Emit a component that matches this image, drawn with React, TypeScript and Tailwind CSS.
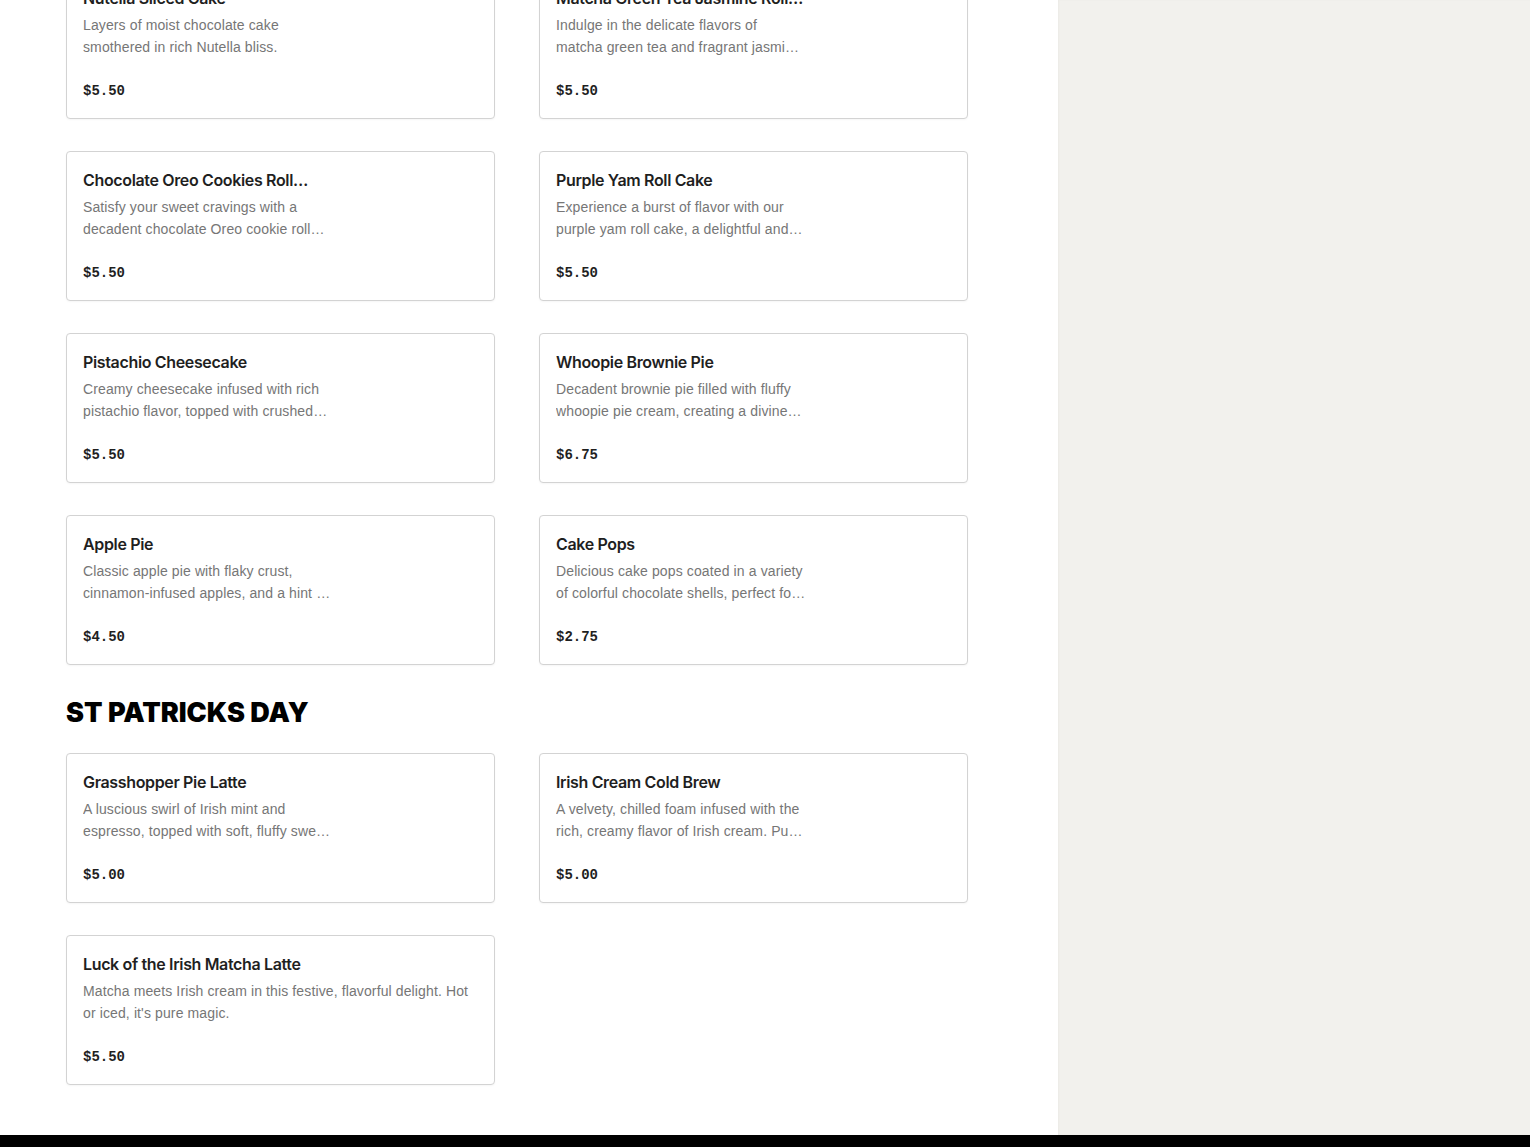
import React from "react";

type Item = { title: string; desc: string; price: string; wide?: boolean };

const rows: Item[][] = [
  [
    { title: "Nutella Sliced Cake", desc: "Layers of moist chocolate cake smothered in rich Nutella bliss.", price: "$5.50" },
    { title: "Matcha Green Tea Jasmine Roll Cake", desc: "Indulge in the delicate flavors of matcha green tea and fragrant jasmine tea rolled into a soft sponge cake.", price: "$5.50" },
  ],
  [
    { title: "Chocolate Oreo Cookies Roll Cake", desc: "Satisfy your sweet cravings with a decadent chocolate Oreo cookie roll cake filled with cream.", price: "$5.50" },
    { title: "Purple Yam Roll Cake", desc: "Experience a burst of flavor with our purple yam roll cake, a delightful and colorful treat.", price: "$5.50" },
  ],
  [
    { title: "Pistachio Cheesecake", desc: "Creamy cheesecake infused with rich pistachio flavor, topped with crushed pistachios.", price: "$5.50" },
    { title: "Whoopie Brownie Pie", desc: "Decadent brownie pie filled with fluffy whoopie pie cream, creating a divine dessert.", price: "$6.75" },
  ],
  [
    { title: "Apple Pie", desc: "Classic apple pie with flaky crust, cinnamon-infused apples, and a hint of nutmeg.", price: "$4.50" },
    { title: "Cake Pops", desc: "Delicious cake pops coated in a variety of colorful chocolate shells, perfect for any occasion.", price: "$2.75" },
  ],
];

const stPat: Item[][] = [
  [
    { title: "Grasshopper Pie Latte", desc: "A luscious swirl of Irish mint and espresso, topped with soft, fluffy sweet cream foam.", price: "$5.00" },
    { title: "Irish Cream Cold Brew", desc: "A velvety, chilled foam infused with the rich, creamy flavor of Irish cream. Pure bliss.", price: "$5.00" },
  ],
  [
    { title: "Luck of the Irish Matcha Latte", desc: "Matcha meets Irish cream in this festive, flavorful delight. Hot or iced, it's pure magic.", price: "$5.50", wide: true },
  ],
];

function Card({ item }: { item: Item }) {
  return (
    <div className="h-[150px] rounded-[4px] border border-[#d3d3d3] bg-white px-4 pt-4 pb-4 flex flex-col shadow-[0_1px_2px_rgba(0,0,0,0.04)]">
      <div className={item.wide ? "w-full" : "w-[250px]"}>
        <div className="text-[16px] leading-[24px] font-semibold tracking-[-0.35px] text-[#1f1f1f] line-clamp-1 h-[24px]" style={{ fontFamily: "Inter, 'Liberation Sans', sans-serif" }}>
          {item.title}
        </div>
        <div className="mt-[4px] text-[14px] leading-[22px] tracking-[0.12px] text-[#767676] line-clamp-2 h-[44px]" style={{ fontFamily: "'Liberation Sans', Arial, sans-serif" }}>
          {item.desc}
        </div>
      </div>
      <div className="mt-[23px] text-[14px] leading-[20px] font-bold text-[#1f1f1f]" style={{ fontFamily: "'Liberation Mono', monospace" }}>
        {item.price}
      </div>
    </div>
  );
}

function Grid({ data }: { data: Item[][] }) {
  return (
    <div className="flex flex-col gap-8">
      {data.map((row, i) => (
        <div key={i} className="grid grid-cols-[429px_429px] gap-x-[44px]">
          {row.map((it) => (
            <Card key={it.title} item={it} />
          ))}
        </div>
      ))}
    </div>
  );
}

export default function App() {
  return (
    <div className="w-[1530px] h-[1147px] overflow-hidden bg-white flex flex-col">
      <div className="flex flex-1 min-h-0">
        <main className="w-[1058px] pl-[66px] overflow-hidden">
          <div className="-mt-[31px]">
            <Grid data={rows} />
            <h2
              className="mt-[34px] mb-[26px] text-[27px] leading-[28px] font-black text-black"
              style={{ fontFamily: "Inter, 'Liberation Sans', sans-serif" }}
            >
              ST PATRICKS DAY
            </h2>
            <Grid data={stPat} />
          </div>
        </main>
        <aside className="flex-1 bg-[#f2f1ed] shadow-[inset_1px_0_2px_rgba(0,0,0,0.03)]" />
      </div>
      <footer className="h-[12px] bg-black" />
    </div>
  );
}
